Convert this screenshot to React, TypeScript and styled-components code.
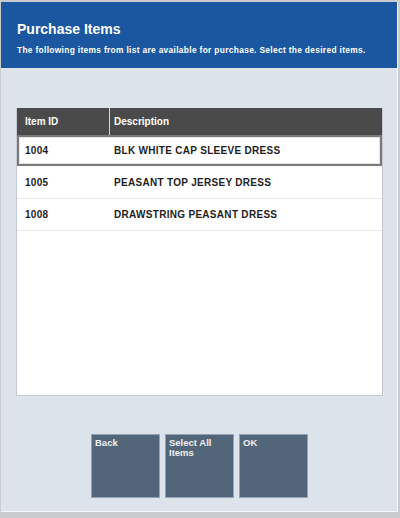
import styled, { createGlobalStyle, css } from "styled-components";

const GlobalStyle = createGlobalStyle`
  html, body {
    margin: 0;
    padding: 0;
    background: #c9cbcd;
  }
  body {
    font-family: "Liberation Sans", Arial, sans-serif;
  }
`;

const Frame = styled.div`
  width: 400px;
  height: 518px;
  box-sizing: border-box;
  padding: 2px 2px 6px 1px;
  background: #c9cbcd;
`;

const Screen = styled.div`
  height: 100%;
  box-sizing: border-box;
  display: flex;
  flex-direction: column;
  background: #dce3eb;
  border-right: 1px solid #f4f6f8;
  border-bottom: 1px solid #f4f6f8;
`;

const Header = styled.header`
  height: 66px;
  box-sizing: border-box;
  padding: 19px 16px 0;
  background: #1a57a0;
  color: #ffffff;
`;

const Title = styled.h1`
  margin: 0;
  font-size: 14px;
  font-weight: bold;
  line-height: 17px;
`;

const Subtitle = styled.p`
  margin: 7px 0 0;
  font-size: 8.4px;
  font-weight: bold;
  letter-spacing: 0.32px;
  line-height: 11px;
  white-space: nowrap;
`;

const Body = styled.main`
  flex: 1;
  display: flex;
  flex-direction: column;
  padding: 40px 14px 0 15px;
`;

const Table = styled.div`
  height: 287px;
  background: #ffffff;
  border: 1px solid #c3c9d0;
  border-top: none;
  display: flex;
  flex-direction: column;
`;

const HeadRow = styled.div`
  display: grid;
  grid-template-columns: 92px 1fr;
  height: 27px;
  background: #4a4a4a;
  color: #ffffff;
  font-size: 10px;
  font-weight: bold;
`;

const HeadCell = styled.div<{ $divider?: boolean }>`
  display: flex;
  align-items: center;
  padding-left: ${(p) => (p.$divider ? "4px" : "8px")};
  ${(p) =>
    p.$divider &&
    css`
      border-left: 1px solid #d8d8d8;
    `}
`;

const Row = styled.div<{ $selected?: boolean }>`
  display: grid;
  grid-template-columns: 92px 1fr;
  height: 32px;
  box-sizing: border-box;
  border-bottom: 1px solid #e8eaec;
  color: #1e1e1e;
  font-size: 10px;
  font-weight: bold;
  letter-spacing: 0.3px;
  ${(p) =>
    p.$selected &&
    css`
      border-bottom-color: transparent;
      box-shadow: inset 0 0 0 2px #7a7a7a, inset 0 0 0 3px #e4e4e4;
    `}
`;

const Cell = styled.div<{ $id?: boolean }>`
  display: flex;
  align-items: center;
  padding-left: ${(p) => (p.$id ? "8px" : "5px")};
`;

const Actions = styled.div`
  display: flex;
  justify-content: center;
  gap: 5px;
  margin-top: 38px;
`;

const ActionButton = styled.button`
  width: 69px;
  height: 64px;
  box-sizing: border-box;
  padding: 3px 3px 0;
  display: flex;
  align-items: flex-start;
  text-align: left;
  background: #536679;
  border: 1px solid #93a3b4;
  color: #eef1f4;
  font-family: "Liberation Sans", Arial, sans-serif;
  font-size: 9.5px;
  font-weight: bold;
  line-height: 10px;
  cursor: pointer;
`;

const items = [
  { id: "1004", desc: "BLK WHITE CAP SLEEVE DRESS" },
  { id: "1005", desc: "PEASANT TOP JERSEY DRESS" },
  { id: "1008", desc: "DRAWSTRING PEASANT DRESS" },
];

export default function App() {
  return (
    <>
      <GlobalStyle />
      <Frame>
        <Screen>
          <Header>
            <Title>Purchase Items</Title>
            <Subtitle>
              The following items from list are available for purchase. Select the desired items.
            </Subtitle>
          </Header>
          <Body>
            <Table>
              <HeadRow>
                <HeadCell>Item ID</HeadCell>
                <HeadCell $divider>Description</HeadCell>
              </HeadRow>
              {items.map((item, i) => (
                <Row key={item.id} $selected={i === 0}>
                  <Cell $id>{item.id}</Cell>
                  <Cell>{item.desc}</Cell>
                </Row>
              ))}
            </Table>
            <Actions>
              <ActionButton>Back</ActionButton>
              <ActionButton>
                Select All
                <br />
                Items
              </ActionButton>
              <ActionButton>OK</ActionButton>
            </Actions>
          </Body>
        </Screen>
      </Frame>
    </>
  );
}
